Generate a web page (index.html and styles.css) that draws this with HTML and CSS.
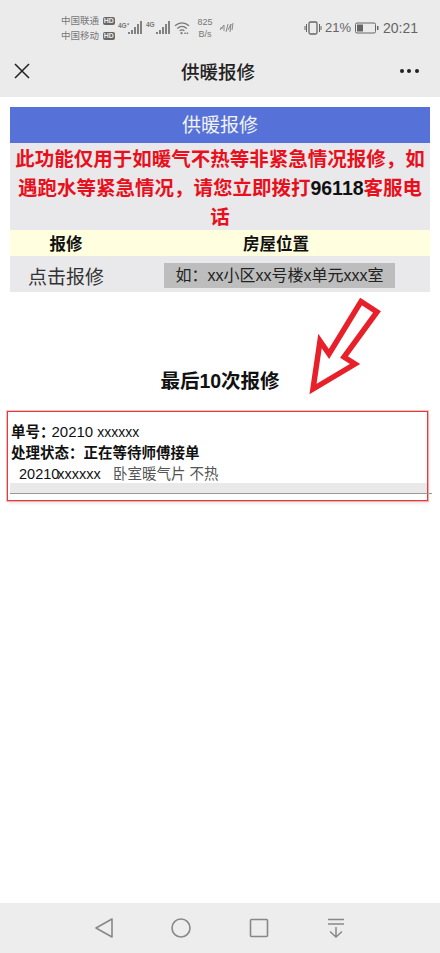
FILE: index.html
```html
<!DOCTYPE html>
<html lang="zh-CN">
<head>
    <meta charset="UTF-8">
    <meta name="viewport" content="width=device-width, initial-scale=1.0">
    <title>供暖报修</title>
    <link rel="stylesheet" href="styles.css">
</head>
<body>
    <div class="phone">
        <div class="statusbar">
            <div class="carriers">
                <div class="carrier">中国联通 <span class="hd">HD</span></div>
                <div class="carrier">中国移动 <span class="hd">HD</span></div>
            </div>
            <div class="signal">
                <span class="net">4G⁺</span>
                <svg width="14" height="13" viewBox="0 0 14 13"><path d="M1 11v2M4 9v4M7 6v7M10 3v10M13 0v13" stroke="#777" stroke-width="1.800" fill="none"/></svg>
            </div>
            <div class="signal">
                <span class="net">4G</span>
                <svg width="14" height="13" viewBox="0 0 14 13"><path d="M1 11v2M4 9v4M7 6v7M10 3v10M13 0v13" stroke="#777" stroke-width="1.800" fill="none"/></svg>
            </div>
            <svg class="wifi" width="16" height="14" viewBox="0 0 17 14"><path d="M1 4.500Q8.500 -1.500 16 4.500M3.500 7.500Q8.500 3 13.500 7.500M6 10Q8.500 8 11 10" stroke="#777" stroke-width="1.400" fill="none"/><circle cx="8" cy="12.500" r="1.200" fill="#777"/><path d="M11 12.500h5" stroke="#777" stroke-width="1.500" stroke-dasharray="1.500 1"/></svg>
            <div class="speed">825<br>B/s</div>
            <svg class="nfc" width="15" height="12" viewBox="0 0 15 12"><path d="M1 8L5 3L5 9M4 6H1M7 10L9 2M9 8L12 2L11 10M13 8L14 1" stroke="#888" stroke-width="1" fill="none"/></svg>
            <div class="status-right">
                <svg width="18" height="14" viewBox="0 0 18 14"><rect x="5" y="1" width="8" height="12" rx="1.500" stroke="#666" stroke-width="1.300" fill="none"/><path d="M2.500 3v8M1 5v4M15.500 3v8M17 5v4" stroke="#666" stroke-width="1"/></svg>
                <span class="batt-pct">21%</span>
                <svg width="24" height="12" viewBox="0 0 24 12"><rect x="0.500" y="1" width="20" height="10" rx="1.500" stroke="#666" fill="none"/><rect x="2" y="2.500" width="6" height="7" fill="#666"/><rect x="22" y="4" width="1.500" height="4" fill="#666"/></svg>
                <span class="clock">20:21</span>
            </div>
        </div>

        <div class="navbar">
            <svg class="nav-close" width="16" height="16" viewBox="0 0 16 16"><path d="M1 1L15 15M15 1L1 15" stroke="#222" stroke-width="1.500" fill="none"/></svg>
            <div class="nav-title">供暖报修</div>
            <div class="nav-more"><i></i><i></i><i></i></div>
        </div>

        <div class="content">
            <div class="panel">
                <div class="panel-title">供暖报修</div>
                <div class="notice">此功能仅用于如暖气不热等非紧急情况报修，如遇跑水等紧急情况，请您立即拨打<span class="hotline">96118</span>客服电话</div>
                <div class="table-head">
                    <div class="col-a">报修</div>
                    <div class="col-b">房屋位置</div>
                </div>
                <div class="table-row">
                    <div class="col-a">点击报修</div>
                    <div class="address">如：xx小区xx号楼x单元xxx室</div>
                </div>
            </div>

            <svg class="arrow" width="80" height="105" viewBox="0 0 80 105"><polygon points="57,7.500 73,18 40,63 51,70 9,95 16,47 25,60" fill="#fff" stroke="#e8202a" stroke-width="5.500"/></svg>

            <h2 class="last-title">最后10次报修</h2>

            <div class="record-box">
                <div class="record-no"><b>单号：</b><span class="no-val">20210</span> <span class="mask">xxxxxx</span></div>
                <div class="record-state">处理状态：正在等待师傅接单</div>
                <div class="record-item">
                    <span class="item-no">20210<span class="mask-tight">xxxxxx</span></span>
                    <span class="item-desc">卧室暖气片 不热</span>
                </div>
                <div class="record-band"></div>
            </div>
        </div>

        <div class="navkeys">
            <svg width="18" height="20" viewBox="0 0 18 20"><path d="M17 1V19L1 10Z" stroke="#888" stroke-width="1.600" fill="none" stroke-linejoin="round"/></svg>
            <svg width="20" height="20" viewBox="0 0 20 20"><circle cx="10" cy="10" r="9" stroke="#888" stroke-width="1.600" fill="none"/></svg>
            <svg width="20" height="20" viewBox="0 0 20 20"><rect x="1.500" y="1.500" width="17" height="17" rx="1" stroke="#888" stroke-width="1.600" fill="none"/></svg>
            <svg width="18" height="20" viewBox="0 0 18 20"><path d="M1 1.500H17M1 6H17M9 9V19M3 13.500L9 19L15 13.500" stroke="#888" stroke-width="1.500" fill="none"/></svg>
        </div>
    </div>
</body>
</html>
```

FILE: styles.css
```css
* {
    box-sizing: border-box;
}
html, body {
    margin: 0;
    padding: 0;
}
body {
    font-family: "Liberation Sans", "Noto Sans CJK SC", sans-serif;
    background: #fff;
    color: #222;
}
.phone {
    width: 440px;
    height: 953px;
    display: flex;
    flex-direction: column;
    overflow: hidden;
}

/* status bar */
.statusbar {
    height: 50px;
    background: #ebebeb;
    display: flex;
    align-items: center;
    padding: 5px 22px 0 61px;
    color: #777;
}
.carriers {
    width: 55px;
    font-size: 9.500px;
    line-height: 15px;
    white-space: nowrap;
}
.hd {
    display: inline-block;
    background: #666;
    color: #ebebeb;
    font-size: 7px;
    line-height: 8px;
    padding: 0 1px;
    border-radius: 2px;
    font-weight: bold;
    vertical-align: 1px;
    margin-left: 1px;
}
.signal {
    display: flex;
    align-items: flex-end;
    margin-left: 2px;
    margin-right: 2px;
}
.net {
    font-size: 6.500px;
    font-weight: bold;
    align-self: flex-start;
    width: 10px;
    white-space: nowrap;
}
.wifi {
    margin-left: 2px;
}
.speed {
    font-size: 9px;
    line-height: 12px;
    text-align: center;
    margin-left: 5px;
    width: 20px;
}
.nfc {
    margin-left: 4px;
}
.status-right {
    margin-left: auto;
    display: flex;
    align-items: center;
    gap: 4px;
    font-size: 14px;
    color: #666;
}
.batt-pct {
    font-size: 13px;
    margin-left: -1px;
}
.clock {
    margin-left: 0;
}

/* wechat title bar */
.navbar {
    height: 47px;
    background: #ebebeb;
    display: flex;
    align-items: center;
    justify-content: space-between;
    padding: 0 21px 6px 14px;
}
.nav-title {
    font-size: 18.500px;
    color: #222;
    font-weight: 500;
    margin-left: 6px;
}
.nav-more {
    display: flex;
    gap: 3.500px;
}
.nav-more i {
    width: 4px;
    height: 4px;
    border-radius: 50%;
    background: #222;
}

.content {
    flex: 1;
    position: relative;
    padding: 10px 10px 0;
}
.panel {
    background: #e9e9eb;
}
.panel-title {
    height: 36px;
    background: #5672d9;
    color: #f2f2f2;
    font-size: 19px;
    line-height: 38px;
    text-align: center;
}
.notice {
    height: 87px;
    color: #e8101c;
    font-size: 19.500px;
    font-weight: bold;
    line-height: 29px;
    text-align: center;
    padding-top: 2px;
}
.hotline {
    color: #111;
}
.table-head {
    height: 26px;
    background: #ffffe0;
    display: flex;
    align-items: center;
    font-size: 16.500px;
    font-weight: bold;
    color: #111;
}
.table-head .col-a {
    width: 112px;
    text-align: center;
}
.col-b {
    flex: 1;
    text-align: center;
}
.table-row {
    height: 36px;
    padding-top: 2px;
    display: flex;
    align-items: center;
    font-size: 19px;
    color: #333;
}
.table-row .col-a {
    width: 154px;
    padding-left: 18px;
}
.address {
    width: 231px;
    height: 25px;
    background: #bdbdbd;
    font-size: 16px;
    line-height: 25px;
    text-align: center;
    color: #222;
}

/* hand drawn marks on the screenshot */
.arrow {
    position: absolute;
    left: 304px;
    top: 197px;
}
.last-title {
    margin: 76px 0 0;
    font-size: 19.500px;
    line-height: 26px;
    text-align: center;
    font-weight: bold;
    color: #111;
}
.record-box {
    position: absolute;
    left: 7px;
    top: 314px;
    width: 421px;
    height: 90px;
    border: 1px solid #e8383c;
    outline: 1px solid rgba(236, 74, 76, 0.35);
    padding-top: 11px;
    box-shadow: 1px 2px 3px rgba(0, 0, 0, 0.12);
}
.record-no {
    font-size: 14.500px;
    line-height: 18px;
    padding-left: 3px;
    color: #111;
}
.no-val {
    font-size: 15px;
    margin-left: -3px;
}
.mask {
    font-size: 14px;
}
.record-state {
    font-size: 14.500px;
    font-weight: bold;
    line-height: 20px;
    padding-left: 3px;
    margin-top: 2px;
    color: #111;
}
.record-item {
    height: 20px;
    display: flex;
    align-items: flex-start;
    padding-left: 11px;
    font-size: 14.500px;
    line-height: 22px;
}
.item-no {
    color: #111;
    width: 94px;
}
.mask-tight {
    margin-left: -2px;
}
.item-desc {
    color: #555;
}
.record-band {
    height: 10px;
    margin: 0 0 0 2px;
    background: #e9e9e9;
    position: relative;
}
.record-band::after {
    content: "";
    position: absolute;
    left: 0;
    right: -5px;
    top: 10px;
    height: 1px;
    background: #999;
}

/* android nav keys */
.navkeys {
    height: 50px;
    background: #ededed;
    display: flex;
    align-items: center;
    padding-left: 95px;
    gap: 58px;
}
```
